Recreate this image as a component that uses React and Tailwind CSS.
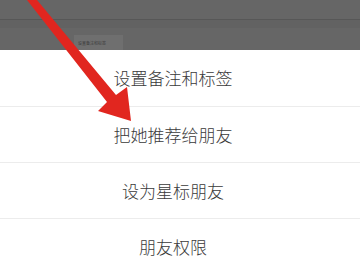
export default function App() {
  const items = ["设置备注和标签", "把她推荐给朋友", "设为星标朋友", "朋友权限"];
  return (
    <div className="relative w-[360px] h-[270px] overflow-hidden bg-white" style={{ fontFamily: '"Noto Sans CJK SC", "Noto Sans", sans-serif' }}>
      <div className="h-[50px] bg-[#666666] flex flex-col">
        <div className="h-[19px]" />
        <div className="h-px bg-[#575757]" />
        <div className="h-[8px] bg-[#626262]" />
        <div className="flex-1 flex items-end">
          <div className="ml-[74px] w-[49px] h-[15px] bg-[#6f6f6f] flex items-center pl-[4px]">
            <span className="text-[4px] text-[#3a3a3a] leading-none">设置备注和标签</span>
          </div>
        </div>
      </div>
      <div className="flex flex-col">
        {items.map((t, i) => (
          <div
            key={t}
            className={`h-[56px] flex items-center justify-center pr-[14px] text-[17px] font-light text-[#3a3a3a] ${i > 0 ? "border-t border-[#ececec]" : ""}`}
          >
            {t}
          </div>
        ))}
      </div>
      <svg className="absolute left-0 top-0" width="360" height="270" viewBox="0 0 360 270">
        <polygon
          points="27,0 37,0 116,95 127,87 131,121 98,111 107,102"
          fill="#e1261f"
        />
      </svg>
    </div>
  );
}
